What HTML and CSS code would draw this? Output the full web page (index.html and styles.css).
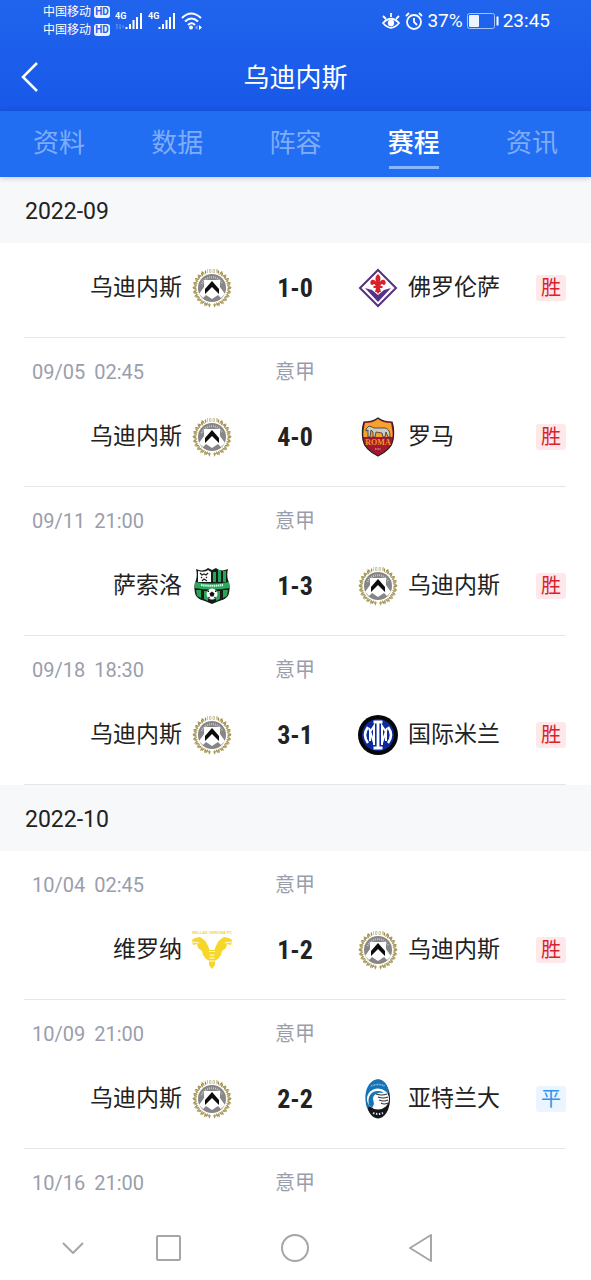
FILE: index.html
```html
<!DOCTYPE html>
<html lang="zh-CN">
<head>
    <meta charset="UTF-8">
    <meta name="viewport" content="width=device-width, initial-scale=1.0">
    <title>乌迪内斯 - 赛程</title>
    <link rel="stylesheet" href="styles.css">
</head>
<body>
    <!-- Udinese crest, reused by the match rows -->
    <svg class="sprite" aria-hidden="true">
        <defs>
            <g id="laurel">
                <path d="M2 .3Q-.5 2 .6 5Q2.800 3 2 .3zM-2 .8Q-3 3.500-.6 5.200Q.2 2.500-2 .8z" fill="#9c8b45"/>
            </g>
            <g id="wreath-half">
                <use href="#laurel" transform="rotate(27 20 20) translate(20 0)"/>
                <use href="#laurel" transform="rotate(41 20 20) translate(20 0)"/>
                <use href="#laurel" transform="rotate(55 20 20) translate(20 0)"/>
                <use href="#laurel" transform="rotate(69 20 20) translate(20 0)"/>
                <use href="#laurel" transform="rotate(83 20 20) translate(20 0)"/>
                <use href="#laurel" transform="rotate(97 20 20) translate(20 0)"/>
                <use href="#laurel" transform="rotate(111 20 20) translate(20 0)"/>
                <use href="#laurel" transform="rotate(125 20 20) translate(20 0)"/>
                <use href="#laurel" transform="rotate(139 20 20) translate(20 0)"/>
                <use href="#laurel" transform="rotate(153 20 20) translate(20 0)"/>
                <use href="#laurel" transform="rotate(167 20 20) translate(20 0)"/>
                <path d="M28 5A17 17 0 0 1 21 37" fill="none" stroke="#b5a66c" stroke-width="1"/>
            </g>
        </defs>
        <symbol id="udinese" viewBox="0 0 40 40">
            <use href="#wreath-half"/>
            <use href="#wreath-half" transform="translate(40 0) scale(-1 1)"/>
            <path d="M15.500 1v4M17.500 1.500h1.500v3h-1.500zM21 1.500h1.500v3H21v-3M24.500 1.500h1v3h-1z" fill="none" stroke="#c6bb90" stroke-width=".8"/>
            <circle cx="20" cy="20" r="14" fill="#868686"/>
            <path d="M9.500 16A11.500 11.500 0 0 1 30.500 16" fill="none" stroke="#c4c4c4" stroke-width="2" stroke-dasharray="1 1"/>
            <path d="M12 12h16v7l5 7-4 4-3-3-6 4-6-4-3 3-4-4 5-7z" fill="#fff"/>
            <path d="M20 13l7 8v5l-7-7-7 7v-5z" fill="#0c0c0c"/>
        </symbol>
    </svg>

    <div class="app">
        <header class="header">
            <div class="status-bar">
                <div class="carriers">
                    <div class="carrier">中国移动 <span class="hd">HD</span></div>
                    <div class="carrier">中国移动 <span class="hd">HD</span></div>
                </div>
                <svg class="signal" viewBox="0 0 28 20">
                    <text x="0" y="8" class="signal-text">4G</text>
                    <path d="M11.500 16v2M15 13v5M18.500 9v9M22 6v12M26 2v16" fill="none" stroke="#fff" stroke-width="2"/>
                    <path d="M2 13v5M1 14l1-1M5 13v5M6 17l-1 1M8 14v3" fill="none" stroke="#6c9bf5"/>
                </svg>
                <svg class="signal" viewBox="0 0 28 20">
                    <text x="0" y="8" class="signal-text">4G</text>
                    <path d="M11.500 16v2M15 13v5M18.500 9v9M22 6v12M26 2v16" fill="none" stroke="#fff" stroke-width="2"/>
                </svg>
                <svg class="wifi" viewBox="0 0 22 18" fill="none" stroke="#fff" stroke-width="2">
                    <path d="M1 6q9-9 19 0M4 9.500q6.500-6 13 0M7 13q3.500-3.500 7 0"/>
                    <circle cx="10" cy="15.500" r="1" fill="#fff"/>
                    <path d="M18 13l3 2.500-3 2.500z" fill="#fff" stroke="none"/>
                    <path d="M16.500 13l-2.500 2.500 2.500 2.500z" fill="#82aaf7" stroke="none"/>
                </svg>
                <div class="status-right">
                    <svg class="eye" viewBox="0 0 20 18" fill="none" stroke="#fff" stroke-width="1.800">
                        <path d="M2 11q8-8.500 16 0q-8 9.500-16 0zM10 1v4M2 4l3 3M18 4l-3 3"/>
                        <circle cx="10" cy="11" r="2.300" fill="#fff"/>
                    </svg>
                    <svg class="alarm" viewBox="0 0 18 18" fill="none" stroke="#fff" stroke-width="1.800">
                        <circle cx="9" cy="10" r="7"/>
                        <path d="M9 6v4l3 3M1 4l3-3M17 4l-3-3"/>
                    </svg>
                    <span>37%</span>
                    <svg class="battery" viewBox="0 0 32 16">
                        <rect x=".5" y=".5" width="27" height="15" rx="2" fill="none" stroke="#a5c2fa"/>
                        <rect x="2" y="2" width="10" height="12" rx="1" fill="#eef4ff"/>
                        <path d="M30.500 3.500v9" stroke="#fff" stroke-width="2"/>
                    </svg>
                    <span>23:45</span>
                </div>
            </div>
            <div class="title-bar">
                <button class="back" type="button" aria-label="返回">
                    <svg viewBox="0 0 20 30" fill="none" stroke="#fff" stroke-width="2.500"><path d="M17 1L3 15l14 14"/></svg>
                </button>
                <h1>乌迪内斯</h1>
            </div>
        </header>

        <nav class="tabs">
            <a href="#info">资料</a>
            <a href="#stats">数据</a>
            <a href="#squad">阵容</a>
            <a href="#schedule" class="active">赛程</a>
            <a href="#news">资讯</a>
        </nav>

        <main>
            <section>
                <h2 class="month">2022-09</h2>
                <article class="match">
                    <div class="teams">
                        <div class="home">乌迪内斯<svg class="crest"><use href="#udinese"/></svg></div>
                        <div class="score">1-0</div>
                        <div class="away">
                            <svg class="crest" viewBox="0 0 40 40">
                                <path d="M20 2l18 18-18 18L2 20z" fill="#fff" stroke="#54307f" stroke-width="2"/>
                                <path d="M7 20l7 2 6 5 6-5 7-2-13 14z" fill="#57308a"/>
                                <path d="M20 6c3 3 3 5 1.500 8.500 1-3 5-4 6-1s-2 4.500-3 2.500c-1.500 0-2 1-2 2h2v2h-2.500l1 4h-1.500l-1.500 2-1.500-2H17l1-4h-2.500v-2h2c0-1-.5-2-2-2-1 2-4 .5-3-2.500s5-2 6 1C17 11 17 9 20 6z" fill="#d8212a"/>
                            </svg>
                            佛罗伦萨<span class="badge win">胜</span>
                        </div>
                    </div>
                </article>
                <article class="match">
                    <div class="meta">
                        <div class="date"><span>09/05</span><span>02:45</span></div>
                        <div class="league">意甲</div>
                    </div>
                    <div class="teams">
                        <div class="home">乌迪内斯<svg class="crest"><use href="#udinese"/></svg></div>
                        <div class="score">4-0</div>
                        <div class="away">
                            <svg class="crest" viewBox="0 0 40 40">
                                <path d="M20 1c4 3 9 4 14 4 2 6 2 12 1 18-1 7-7 12-15 16-8-4-14-9-15-16-1-6-1-12 1-18 5 0 10-1 14-4z" fill="#a4182f" stroke="#222" stroke-width="1.200"/>
                                <path d="M20 2c4 3 8 4 13 4 1 5 2 10 1.500 14h-29C5 16 6 11 7 6c5 0 9-1 13-4z" fill="#f8a12c"/>
                                <path d="M8 12l3-3 3 1 2 1h11c4 1 5 4 5 9h-2l-2-5-1 5h-2l-1-4-6-1-1 5h-2v-5l-2-2-1 7h-2v-7l-2 1z" fill="#cfccc6" stroke="#333" stroke-width=".8"/>
                                <text x="20" y="28" class="crest-roma">ROMA</text>
                                <path d="M17 32h6" stroke="#d7828c" stroke-width="1.500" stroke-dasharray="1 .5"/>
                            </svg>
                            罗马<span class="badge win">胜</span>
                        </div>
                    </div>
                </article>
                <article class="match">
                    <div class="meta">
                        <div class="date"><span>09/11</span><span>21:00</span></div>
                        <div class="league">意甲</div>
                    </div>
                    <div class="teams">
                        <div class="home">
                            萨索洛
                            <svg class="crest" viewBox="0 0 40 40">
                                <path d="M4 3c4 2 9 2 12-1l4 2 4-2c3 3 8 3 12 1-1 4-1 7 0 11 2 4 2 8 1 13-1 7-9 7-17 11-8-4-16-4-17-11-1-5-1-9 1-13 1-4 1-7 0-11z" fill="#151b18"/>
                                <path d="M6 5c4 1 8 1 10-1l3 2v10H6z" fill="#fff"/>
                                <path d="M21 6h3v10h-3zM26 4h3v12h-3zM31 5h3v11h-3z" fill="#27a65a"/>
                                <path d="M8 7l2 2 2-1 2 1 2-2M9 11l1 1M14 12l1-1M10 15l2-2 3 2" fill="none" stroke="#222" stroke-width="1.200"/>
                                <path d="M3 16q17 3 34 0v6q-17 3-34 0z" fill="#2aaa5d"/>
                                <path d="M9 19q11 1.500 22 0" fill="none" stroke="#e7fff0" stroke-width="2" stroke-dasharray="1.500 .6"/>
                                <path d="M4 24h5v8l-4-2zM12 25h4v10l-4-2zM24 25h4v8l-4 2zM31 24h5l-1 6-4 2z" fill="#28a358"/>
                                <circle cx="20" cy="28" r="5.500" fill="#fff"/>
                                <path d="M20 25.500l2.500 2-1 3h-3l-1-3zM15 26l2-2v2zM25 26l-2-2v2zM16 32l1-1.500 1.500 2zM24 32l-1-1.500-1.500 2z" fill="#111"/>
                            </svg>
                        </div>
                        <div class="score">1-3</div>
                        <div class="away"><svg class="crest"><use href="#udinese"/></svg>乌迪内斯<span class="badge win">胜</span></div>
                    </div>
                </article>
                <article class="match">
                    <div class="meta">
                        <div class="date"><span>09/18</span><span>18:30</span></div>
                        <div class="league">意甲</div>
                    </div>
                    <div class="teams">
                        <div class="home">乌迪内斯<svg class="crest"><use href="#udinese"/></svg></div>
                        <div class="score">3-1</div>
                        <div class="away">
                            <svg class="crest" viewBox="0 0 40 40">
                                <circle cx="20" cy="20" r="20" fill="#05060a"/>
                                <circle cx="20" cy="20" r="16" fill="#0c2a9e"/>
                                <path d="M15.500 7h9M15.500 33h9M20 7v26" fill="none" stroke="#fff" stroke-width="2.800"/>
                                <path d="M16 30V11l-4 6v9M24 30V11l4 6v9M16 28L11 13M24 28l5-15" fill="none" stroke="#fff" stroke-width="2"/>
                                <path d="M10 12q-6 8 0 16M30 12q6 8 0 16" fill="none" stroke="#fff" stroke-width="2.600"/>
                            </svg>
                            国际米兰<span class="badge win">胜</span>
                        </div>
                    </div>
                </article>
            </section>

            <section>
                <h2 class="month">2022-10</h2>
                <article class="match">
                    <div class="meta">
                        <div class="date"><span>10/04</span><span>02:45</span></div>
                        <div class="league">意甲</div>
                    </div>
                    <div class="teams">
                        <div class="home">
                            维罗纳
                            <svg class="crest" viewBox="0 0 40 40">
                                <text x="20" y="4" class="crest-verona">HELLAS VERONA FC</text>
                                <path d="M8 7q6 3 8 9l2 5v10l-4-2-3-4-1-4-4-3-1-4-4 1-1-5 3-2z" fill="#f6d629"/>
                                <path d="M32 7q-6 3-8 9l-2 5v10l4-2 3-4 1-4 4-3 1-4 4 1 1-5-3-2z" fill="#f6d629"/>
                                <path d="M17 20h6v15l-3 4-3-4z" fill="#f6d629"/>
                                <path d="M17 21.500h6M17.500 25h5M17.500 28h5M17.500 31h5M1 12l6 1M39 12l-6 1" stroke="#fff" stroke-width="1"/>
                            </svg>
                        </div>
                        <div class="score">1-2</div>
                        <div class="away"><svg class="crest"><use href="#udinese"/></svg>乌迪内斯<span class="badge win">胜</span></div>
                    </div>
                </article>
                <article class="match">
                    <div class="meta">
                        <div class="date"><span>10/09</span><span>21:00</span></div>
                        <div class="league">意甲</div>
                    </div>
                    <div class="teams">
                        <div class="home">乌迪内斯<svg class="crest"><use href="#udinese"/></svg></div>
                        <div class="score">2-2</div>
                        <div class="away">
                            <svg class="crest" viewBox="0 0 40 40">
                                <ellipse cx="20" cy="20" rx="12" ry="19.500" fill="#15171a"/>
                                <path d="M20 .5c7 0 10 7 11 13L20 24 9 29C4 13 11 .5 20 .5z" fill="#1674b5"/>
                                <path d="M13 7q7-3 14 0" fill="none" stroke="#8dc1e6" stroke-width="1.500" stroke-dasharray="1 .6"/>
                                <ellipse cx="20" cy="20" rx="11" ry="10.500" fill="#fff"/>
                                <path d="M11 26c-2-8 2-14 9-14 4 0 6 2 6 2-7-1-11 2-11 6l1 5-2 4z" fill="#1674b5"/>
                                <path d="M18 15q6 2 11 0M20 18q5 2 10 0M21 21q5 2 9 0M23 24q3 2 7 0" fill="none" stroke="#333" stroke-width="1.200"/>
                                <path d="M15 34q5 2 10 0" fill="none" stroke="#ddd" stroke-width="2" stroke-dasharray="1.500 1.500"/>
                            </svg>
                            亚特兰大<span class="badge draw">平</span>
                        </div>
                    </div>
                </article>
                <article class="match">
                    <div class="meta">
                        <div class="date"><span>10/16</span><span>21:00</span></div>
                        <div class="league">意甲</div>
                    </div>
                </article>
            </section>
        </main>

        <footer class="system-nav">
            <button type="button" aria-label="收起"><svg viewBox="0 0 28 28"><path d="M4 9l10 10L24 9"/></svg></button>
            <button type="button" aria-label="最近任务"><svg viewBox="0 0 28 28"><rect x="3" y="2" width="23" height="24" rx="1"/></svg></button>
            <button type="button" aria-label="主页"><svg viewBox="0 0 28 28"><circle cx="14" cy="14" r="13"/></svg></button>
            <button type="button" aria-label="返回上一级"><svg viewBox="0 0 28 28"><path d="M24 1v26L3 14z"/></svg></button>
        </footer>
    </div>
</body>
</html>
```
FILE: styles.css
```css
* {
    box-sizing: border-box;
}
body {
    margin: 0;
    font-family: Roboto, "Noto Sans CJK SC", sans-serif;
    color: #222;
    background-color: #fff;
}
h1, h2 {
    margin: 0;
    font-weight: 400;
}
button {
    padding: 0;
    border: none;
    background: none;
    cursor: pointer;
}
svg {
    display: block;
    flex: none;
}
.sprite {
    position: absolute;
    width: 0;
    height: 0;
}
.app {
    display: flex;
    flex-direction: column;
    min-height: 100vh;
}

/* Header */
.header {
    color: #fff;
    background: linear-gradient(#2064ed, #1858e8);
}
.status-bar {
    display: flex;
    align-items: center;
    gap: 5px;
    height: 42px;
    padding: 0 41px 0 43px;
}
.carrier {
    display: flex;
    align-items: center;
    gap: 3px;
    font-size: 12px;
    line-height: 18px;
}
.hd {
    width: 16px;
    border-radius: 3px;
    background-color: #eef4ff;
    color: #1f61ec;
    font-size: 10px;
    font-weight: 700;
    line-height: 12px;
    text-align: center;
}
.signal {
    width: 28px;
    height: 20px;
}
.signal-text {
    fill: #fff;
    font: 700 9px Roboto, sans-serif;
}
.wifi {
    width: 22px;
    height: 18px;
}
.status-right {
    display: flex;
    align-items: center;
    gap: 4px;
    margin-left: auto;
    font-size: 19px;
    line-height: 20px;
}
.eye {
    width: 20px;
    height: 18px;
}
.alarm {
    width: 18px;
    height: 18px;
}
.battery {
    width: 32px;
    height: 16px;
}
.title-bar {
    display: grid;
    grid-template-columns: 40px 1fr 40px;
    align-items: center;
    height: 69px;
    padding: 0 20px;
}
.back svg {
    width: 20px;
    height: 30px;
}
.title-bar h1 {
    padding-top: 2px;
    font-size: 26px;
    line-height: 40px;
    text-align: center;
}

/* Tabs */
.tabs {
    position: relative;
    display: grid;
    grid-template-columns: repeat(5, 1fr);
    height: 66px;
    background-color: #226ef2;
    box-shadow: 0 1px 6px rgba(0, 0, 0, 0.2);
}
.tabs a {
    display: flex;
    flex-direction: column;
    align-items: center;
    gap: 3px;
    padding-top: 12px;
    color: #7eacf8;
    font-size: 26px;
    line-height: 40px;
    text-decoration: none;
}
.tabs .active {
    color: #fff;
    font-weight: 500;
}
.tabs .active::after {
    content: "";
    width: 50px;
    height: 3px;
    background-color: #8ab6fc;
}

/* Schedule */
.month {
    padding: 4px 25px 0;
    background-color: #f7f8fa;
    font-size: 23px;
    line-height: 62px;
}
.match {
    margin: 0 25px 0 24px;
    border-bottom: 1px solid #e6e6e6;
}
section:last-child .match:last-child {
    border-bottom: none;
}
.meta, .teams {
    display: grid;
    grid-template-columns: 1fr 126px 1fr;
    align-items: center;
}
.meta {
    padding: 24px 0 10px;
    color: #9a9eac;
    font-size: 20px;
    line-height: 20px;
}
.date {
    display: flex;
    gap: 9px;
    padding-left: 8px;
}
.league {
    text-align: center;
}
.teams {
    padding: 25px 0 29px;
}
.home, .away {
    display: flex;
    align-items: center;
    gap: 10px;
    font-size: 23px;
    line-height: 40px;
}
.home {
    justify-content: flex-end;
}
.crest {
    width: 40px;
    height: 40px;
}
.crest-roma {
    fill: #f49a24;
    font: 700 8px "Liberation Serif", serif;
    text-anchor: middle;
}
.crest-verona {
    fill: #f6d629;
    font: 700 4px "Liberation Sans", sans-serif;
    text-anchor: middle;
}
.score {
    font-family: "Roboto Condensed", Roboto, sans-serif;
    font-size: 26px;
    font-weight: 700;
    line-height: 40px;
    text-align: center;
}
.badge {
    width: 30px;
    margin-left: auto;
    border-radius: 3px;
    font-size: 20px;
    line-height: 26px;
    text-align: center;
}
.win {
    background-color: #fee8ea;
    color: #d8232e;
}
.draw {
    background-color: #eaf5ff;
    color: #3094ee;
}

/* System navigation */
.system-nav {
    display: grid;
    grid-template-columns: 1fr 2fr 2fr 2fr;
    height: 64px;
    margin-top: auto;
    padding: 0 18% 0 7%;
}
.system-nav button {
    display: flex;
    align-items: center;
    justify-content: center;
}
.system-nav svg {
    width: 28px;
    height: 28px;
    fill: none;
    stroke: #a6a6a6;
    stroke-width: 2;
    stroke-linejoin: round;
}
```
